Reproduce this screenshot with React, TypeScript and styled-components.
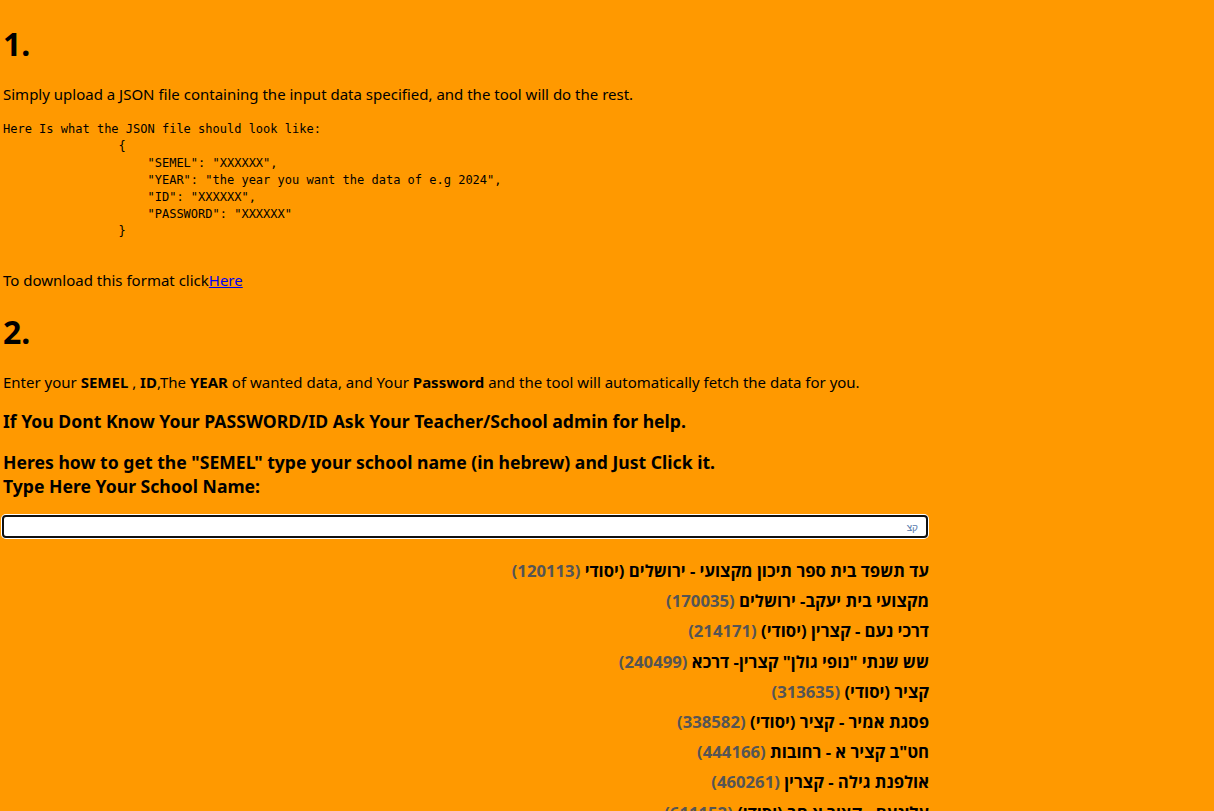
import React from "react";
import styled, { createGlobalStyle } from "styled-components";

const GlobalStyle = createGlobalStyle`
  html, body {
    margin: 0;
    padding: 0;
    background: #ff9900;
  }
  body {
    font-family: "Noto Sans", "Open Sans", sans-serif;
    color: #000;
  }
`;

const Page = styled.div`
  padding: 3px 3px 0;
  width: 926px;
`;

const StepTitle = styled.h1`
  font-size: 32px;
  font-weight: 700;
  margin: 19px 0 19px;
`;

const Text = styled.p`
  font-size: 15px;
  line-height: 21px;
  margin: 16px 0;
`;

const Code = styled.pre`
  font-family: "DejaVu Sans Mono", monospace;
  font-size: 12px;
  line-height: 17px;
  margin: 16px 0 30px;
`;

const Link = styled.a`
  color: #0000ee;
  text-decoration: underline;
`;

const Notice = styled.h3`
  font-size: 17.6px;
  font-weight: 700;
  margin: 16px 0 17px;
  line-height: 24px;
`;

const SearchInput = styled.input`
  display: block;
  box-sizing: border-box;
  width: 926px;
  height: 23px;
  margin: 0 0 0 -1px;
  border: 2px solid #101010;
  border-radius: 4px;
  box-shadow: 0 0 0 1px #ffffff;
  background: #fff;
  font-family: "Noto Sans", sans-serif;
  font-size: 10px;
  color: #5577aa;
  padding: 0 8px;
  outline: none;
`;

const ResultList = styled.ul`
  list-style: none;
  margin: 18px 0 0;
  padding: 0;
  direction: rtl;
`;

const ResultItem = styled.li`
  font-size: 16.7px;
  font-weight: 700;
  line-height: 30.2px;
  text-align: right;
`;

const SchoolCode = styled.span`
  color: #555555;
`;

const schools: [string, string][] = [
  ["עד תשפד בית ספר תיכון מקצועי - ירושלים (יסודי", "120113"],
  ["מקצועי בית יעקב- ירושלים", "170035"],
  ["דרכי נעם - קצרין (יסודי)", "214171"],
  ["שש שנתי \"נופי גולן\" קצרין- דרכא", "240499"],
  ["קציר (יסודי)", "313635"],
  ["פסגת אמיר - קציר (יסודי)", "338582"],
  ["חט\"ב קציר א - רחובות", "444166"],
  ["אולפנת גילה - קצרין", "460261"],
  ["עלינעם - קציר א חב (יסודי)", "611152"],
];

const json = `Here Is what the JSON file should look like:
                {
                    "SEMEL": "XXXXXX",
                    "YEAR": "the year you want the data of e.g 2024",
                    "ID": "XXXXXX",
                    "PASSWORD": "XXXXXX"
                }`;

export default function App() {
  return (
    <>
      <GlobalStyle />
      <Page>
        <StepTitle>1.</StepTitle>
        <Text>
          Simply upload a JSON file containing the input data specified, and the tool will do the rest.
        </Text>
        <Code>{json}</Code>
        <Text>
          To download this format click<Link href="#">Here</Link>
        </Text>
        <StepTitle>2.</StepTitle>
        <Text>
          Enter your <b>SEMEL</b> , <b>ID</b>,The <b>YEAR</b> of wanted data, and Your <b>Password</b> and the tool will automatically fetch the data for you.
        </Text>
        <Notice>If You Dont Know Your PASSWORD/ID Ask Your Teacher/School admin for help.</Notice>
        <Notice>
          Heres how to get the "SEMEL" type your school name (in hebrew) and Just Click it.
          <br />
          Type Here Your School Name:
        </Notice>
        <SearchInput dir="rtl" defaultValue="קצ" />
        <ResultList>
          {schools.map(([name, code]) => (
            <ResultItem key={code}>
              {name} <SchoolCode>({code})</SchoolCode>
            </ResultItem>
          ))}
        </ResultList>
      </Page>
    </>
  );
}
